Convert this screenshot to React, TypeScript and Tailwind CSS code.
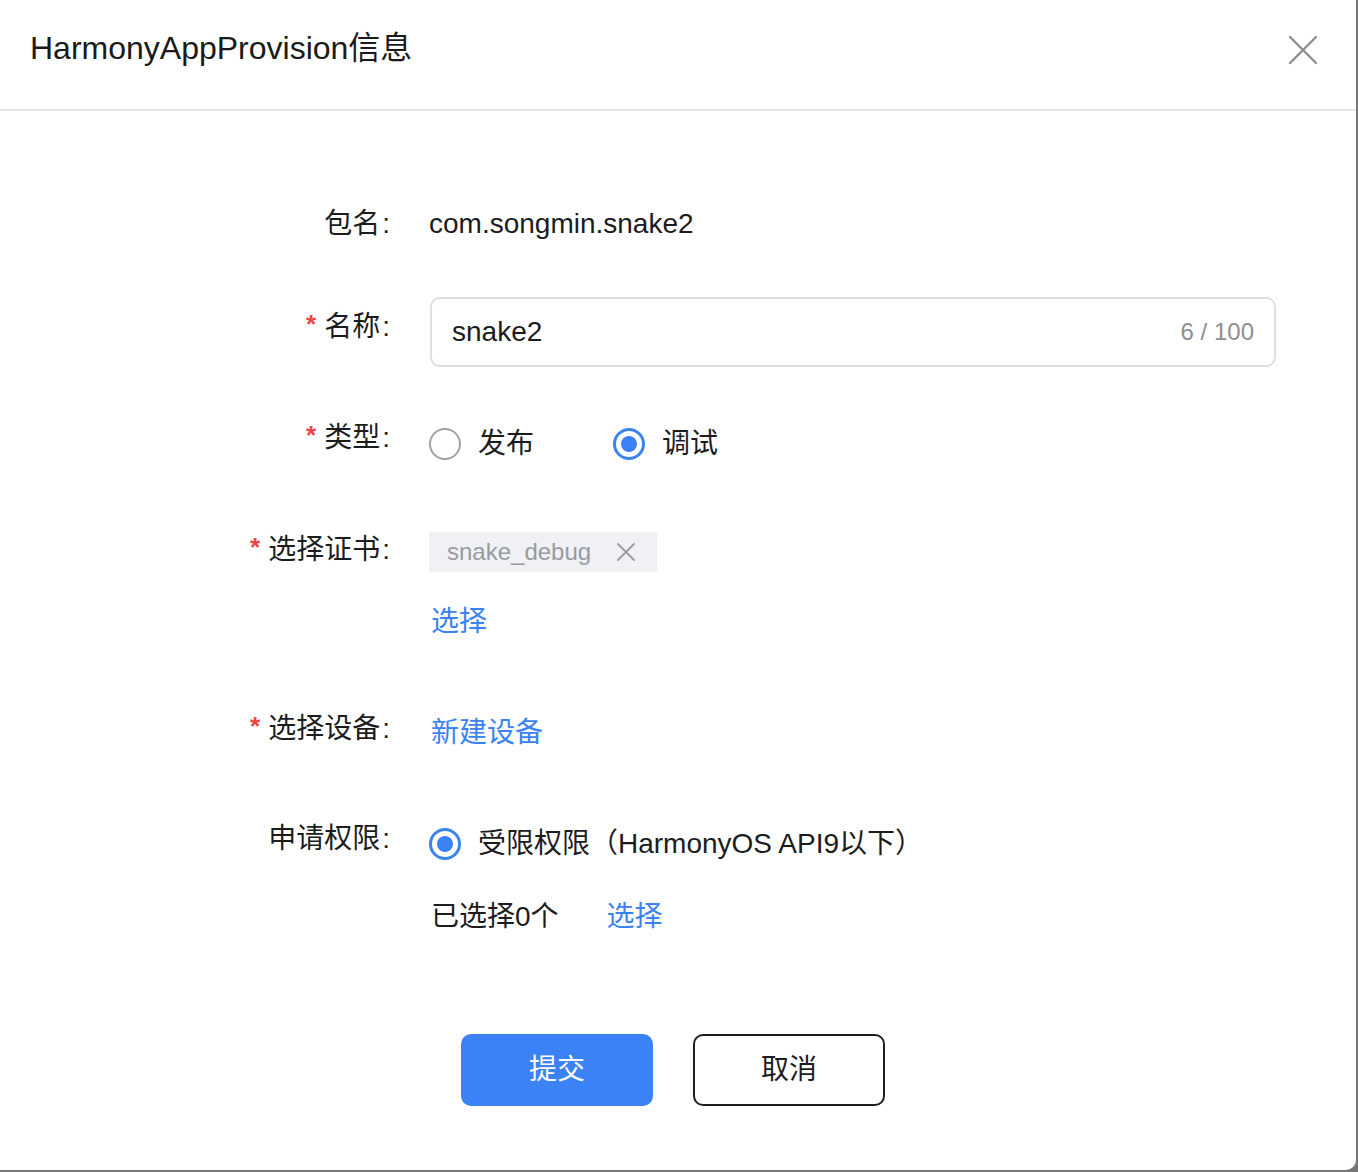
import React from "react";

function Radio({ checked }: { checked: boolean }) {
  return checked ? (
    <span className="flex h-[32px] w-[32px] shrink-0 items-center justify-center rounded-full border-[3px] border-[#3b82f6]">
      <span className="h-[16px] w-[16px] rounded-full bg-[#3b82f6]" />
    </span>
  ) : (
    <span className="h-[32px] w-[32px] shrink-0 rounded-full border-2 border-[#a1a1a6]" />
  );
}

function Label({ text, required, offset }: { text: string; required?: boolean; offset: string }) {
  return (
    <div className={`flex w-[390px] shrink-0 justify-end leading-[40px] text-[#1c1c1e] ${offset}`}>
      {required && <span className="mr-[8px] mt-[-3px] text-[26px] font-bold text-[#ef4444]">*</span>}
      <span>{text}</span>
      <span className="ml-[2px]">:</span>
    </div>
  );
}

export default function App() {
  return (
    <div
      className="h-[1172px] w-[1358px] bg-[#777777]"
      style={{ fontFamily: '"Liberation Sans", "Noto Sans CJK SC", sans-serif' }}
    >
      <div className="flex h-[1170px] w-[1356px] flex-col rounded-br-[10px] bg-white">
        {/* header */}
        <div className="flex h-[111px] shrink-0 items-start justify-between border-b-2 border-[#e6e6e8] pl-[30px] pr-[38px] pt-[28px]">
          <h1 className="text-[32px] leading-[40px] text-[#1a1a1a]">HarmonyAppProvision信息</h1>
          <svg className="mt-[7px]" width="30" height="30" viewBox="0 0 30 30" fill="none" stroke="#8e8e93" strokeWidth="2.4" strokeLinecap="round">
            <path d="M2 2L28 28M28 2L2 28" />
          </svg>
        </div>

        {/* form */}
        <div className="flex flex-col pt-[93px] text-[28px]">
          {/* package */}
          <div className="flex items-start">
            <Label text="包名" offset="" />
            <div className="ml-[39px] leading-[40px] text-[#1c1c1e]">com.songmin.snake2</div>
          </div>

          {/* name */}
          <div className="mt-[53px] flex items-start">
            <Label text="名称" required offset="mt-[10px]" />
            <div className="ml-[40px] mr-[80px] flex h-[70px] flex-1 items-center justify-between rounded-[10px] border-2 border-[#dedee3] pl-[20px] pr-[20px]">
              <span className="text-[#1c1c1e]">snake2</span>
              <span className="text-[24px] text-[#8e8e93]">6 / 100</span>
            </div>
          </div>

          {/* type */}
          <div className="mt-[51px] flex items-start">
            <Label text="类型" required offset="" />
            <div className="ml-[39px] flex pt-[6px] leading-[40px] text-[#1c1c1e]">
              <div className="flex w-[184px] items-center gap-[17px]">
                <Radio checked={false} />
                <span>发布</span>
              </div>
              <div className="flex items-center gap-[17px]">
                <Radio checked />
                <span>调试</span>
              </div>
            </div>
          </div>

          {/* certificate */}
          <div className="mt-[66px] flex items-start">
            <Label text="选择证书" required offset="" />
            <div className="ml-[39px] flex flex-col items-start pt-[2px]">
              <div className="flex h-[40px] items-center bg-[#f0f1f5] pl-[18px] pr-[22px]">
                <span className="text-[24px] text-[#9a9aa0]">snake_debug</span>
                <svg className="ml-[26px]" width="18" height="18" viewBox="0 0 18 18" fill="none" stroke="#9a9aa0" strokeWidth="1.8" strokeLinecap="round">
                  <path d="M1 1L17 17M17 1L1 17" />
                </svg>
              </div>
              <div className="mt-[30px] pl-[2px] leading-[40px] text-[#3b82f6]">选择</div>
            </div>
          </div>

          {/* device */}
          <div className="mt-[67px] flex items-start">
            <Label text="选择设备" required offset="" />
            <div className="ml-[41px] pt-[4px] leading-[40px] text-[#3b82f6]">新建设备</div>
          </div>

          {/* permission */}
          <div className="mt-[66px] flex items-start">
            <Label text="申请权限" offset="" />
            <div className="ml-[39px] flex flex-col pt-[5px] leading-[40px] text-[#1c1c1e]">
              <div className="flex items-center gap-[17px]">
                <Radio checked />
                <span>受限权限（HarmonyOS API9以下）</span>
              </div>
              <div className="mt-[33px] flex pl-[2px]">
                <span>已选择0个</span>
                <span className="ml-[48px] text-[#3b82f6]">选择</span>
              </div>
            </div>
          </div>

          {/* actions */}
          <div className="mt-[97px] flex justify-center gap-[40px] pr-[10px]">
            <button className="h-[72px] w-[192px] rounded-[10px] bg-[#3b82f6] text-white">提交</button>
            <button className="h-[72px] w-[192px] rounded-[10px] border-2 border-[#1f1f1f] bg-white text-[#1c1c1e]">取消</button>
          </div>
        </div>
      </div>
    </div>
  );
}
